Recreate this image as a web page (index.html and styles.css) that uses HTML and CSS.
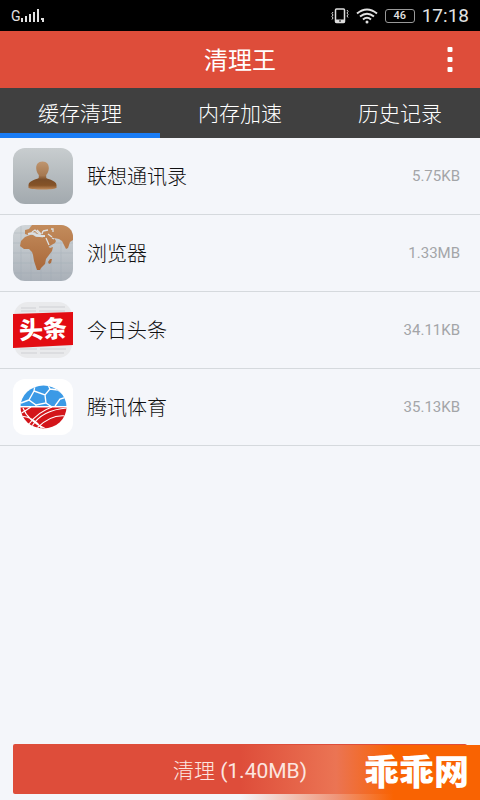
FILE: index.html
```html
<!DOCTYPE html>
<html lang="zh-CN">
<head>
<meta charset="utf-8">
<meta name="viewport" content="width=device-width, initial-scale=1">
<title>清理王</title>
<link rel="stylesheet" href="styles.css">
</head>
<body>
<div class="status">
  <div class="signal"><span class="network">G</span>
    <svg width="24" height="14" viewBox="0 0 24 14" fill="#e2e2e2" aria-hidden="true"><path d="M0 9h2v4H0zM4 7h2v6H4zM8 5h2v8H8zM12 3h2v10h-2zM16 0h2v13h-2zM20 9h3v4h-2v-2h-1z"/></svg>
  </div>
  <div class="tray">
    <svg width="18" height="16" viewBox="0 0 18 16" fill="none" stroke="#ddd" aria-hidden="true"><rect x="4.500" y="1" width="9" height="13.500" rx="1" stroke-width="1.500"/><path d="M4.500 13h9" stroke-width="3"/><path d="M8 13h2" stroke="#000"/><path d="M2 4l-1 1.500L2 7 1 8.500 2 10l-1 1.500M16 2l1 1.500L16 5l1 1.500L16 8l1 1.500"/></svg>
    <svg width="22" height="16" viewBox="0 0 22 16" fill="none" stroke="#e2e2e2" stroke-width="2" aria-hidden="true"><path d="M1 5.500Q11-2.500 21 5.500M4 8.500Q11 3 18 8.500M7 11.500Q11 8 15 11.500"/><circle cx="11" cy="14" r="1.500" fill="#e2e2e2" stroke="none"/></svg>
    <span class="battery">46</span>
    <time class="clock">17:18</time>
  </div>
</div>
<header class="bar">
  <h1 class="title">清理王</h1>
  <button class="more" type="button" aria-label="更多"><svg width="6" height="26" viewBox="0 0 6 26" fill="#fff" aria-hidden="true"><rect x=".5" y="0" width="5" height="5" rx="1"/><rect x=".5" y="10" width="5" height="5" rx="1"/><rect x=".5" y="20" width="5" height="5" rx="1"/></svg></button>
</header>
<nav class="tabs">
  <button class="tab active" type="button">缓存清理</button>
  <button class="tab" type="button">内存加速</button>
  <button class="tab" type="button">历史记录</button>
</nav>
<main class="main">
  <ul class="list">
    <li class="row">
      <svg class="icon" viewBox="0 0 60 56" aria-hidden="true">
        <defs>
          <linearGradient id="silver" x2="0" y2="1"><stop offset="0" stop-color="#c8cdcf"/><stop offset="1" stop-color="#a2a9ae"/></linearGradient>
          <linearGradient id="person" x2="0" y2="1"><stop offset="0" stop-color="#bf9670"/><stop offset=".5" stop-color="#a67850"/><stop offset=".65" stop-color="#7a4d28"/><stop offset=".85" stop-color="#855328"/><stop offset="1" stop-color="#c08a5a"/></linearGradient>
        </defs>
        <rect width="60" height="56" rx="12" fill="url(#silver)"/>
        <path fill="url(#person)" d="M29.500 13.500c4.500 0 6.500 3 6.300 7-.2 3-1.300 5-2.600 6.600v2.400c0 1.800 10.300 2.500 10.300 7.500V40c-4 2-24 2-28 0v-3c0-5 10.300-5.700 10.300-7.500v-2.400c-1.300-1.600-2.400-3.600-2.600-6.600-.2-4 1.800-7 6.300-7z"/>
      </svg>
      <span class="name">联想通讯录</span><span class="size">5.75KB</span>
    </li>
    <li class="row">
      <svg class="icon" viewBox="0 0 60 56" aria-hidden="true">
        <defs>
          <linearGradient id="sea" x2="0" y2="1"><stop offset="0" stop-color="#d0d5d8"/><stop offset="1" stop-color="#a9b0b8"/></linearGradient>
          <linearGradient id="land" gradientUnits="userSpaceOnUse" x1="0" y1="0" x2="0" y2="44"><stop offset="0" stop-color="#c38c5c"/><stop offset="1" stop-color="#aa693b"/></linearGradient>
          <clipPath id="tile"><rect width="60" height="56" rx="12"/></clipPath>
        </defs>
        <g clip-path="url(#tile)">
          <rect width="60" height="56" fill="url(#sea)"/>
          <path d="M8 0v56M18 0v56M28 0v56M38 0v56M48 0v56M0 8h60M0 18h60M0 28h60M0 38h60M0 48h60" stroke="#98a4b0" stroke-width=".6" opacity=".5"/>
          <g fill="url(#land)">
            <path d="M12 9l0-4 4-1 3-4h41v15l-3 2-2 6-2 1-4-8-3-2-5-1 2 3-1 2-7 4-5-9-2-4-4 0-2-2-4 1-3 2z"/>
            <path d="M12 12l5-2 3 0 3 2 4 0 5 1 3 8 2 2 3-1-1 4-6 8-1 5-4 4-1 2-3 0-3-9-1-6-1-3-3-3-5 0-4-3 1-5z"/>
            <path d="M39 34l-1 4-2 1-1-2 2-3z"/>
          </g>
          <g fill="none" stroke="#dce0e2">
            <path d="M15 9l4-1 4 2 4 1 5 0" stroke-width="2"/>
            <path d="M19 7l3-2 3 3 2 1M24 5l4 4M29 9l1-3M30 6l5-1" stroke-width="1.300"/>
            <path d="M38 4l2 0 0 3M39 12l-4-3M33 13l3 7M41 14l-2-1" stroke-width="1.300"/>
          </g>
        </g>
      </svg>
      <span class="name">浏览器</span><span class="size">1.33MB</span>
    </li>
    <li class="row">
      <svg class="icon" viewBox="0 0 60 56" aria-hidden="true">
        <rect x="1" width="58" height="56" rx="14" fill="#e9eaec"/>
        <path d="M8 6h15M8 9h15M26 5h26M26 9h26M7 47h17M27 47h26M8 51h16M27 51h24" stroke="#cfd0d4"/>
        <path d="M0 12l60-2v33L0 46z" fill="#e30c12"/>
        <text class="news" x="30" y="36" text-anchor="middle" transform="rotate(-3 30 28)">头条</text>
      </svg>
      <span class="name">今日头条</span><span class="size">34.11KB</span>
    </li>
    <li class="row">
      <svg class="icon" viewBox="0 0 60 56" aria-hidden="true">
        <defs><clipPath id="ball"><ellipse cx="30.500" cy="28" rx="23" ry="21.500"/></clipPath></defs>
        <rect width="60" height="56" rx="12" fill="#fff"/>
        <g clip-path="url(#ball)">
          <path d="M7 6h47v21H7z" fill="#3b9ae6"/><path d="M7 28.500h47V50H7z" fill="#d3151a"/>
          <path fill="none" stroke="#fff" stroke-width="1.400" d="M22 6l-1 6 11 4 5-6-2-4M37 10l8 1 5 4M21 12l-5 9 7 5 10-2-1-8M16 21l-8 3M23 26v2M33 24l6 4M54 18l-7 2-5 7"/>
          <path fill="none" stroke="#fff" stroke-width="1.200" d="M7 35Q12 32 18 28M10 29Q15 42 33 50M8 37Q22 38 29 50M39 28Q25 33 16 45M54 29Q29 31 19 47M53 37Q38 35 24 49"/>
        </g>
      </svg>
      <span class="name">腾讯体育</span><span class="size">35.13KB</span>
    </li>
  </ul>
</main>
<footer class="footer">
  <button class="clean" type="button"><span class="label">清理 <span class="amount">(1.40MB)</span></span></button>
  <div class="mark">乖乖网</div>
</footer>
</body>
</html>
```
FILE: styles.css
```css
* { box-sizing: border-box; }
body {
  margin: 0;
  min-height: 100vh;
  display: flex;
  flex-direction: column;
  background: #f4f6fa;
  color: #111;
  font-family: Roboto, "Noto Sans CJK SC", sans-serif;
}
button {
  border: 0;
  padding: 0;
  background: none;
  color: inherit;
  font: inherit;
}
.status {
  height: 31px;
  padding: 0 11px;
  display: flex;
  align-items: center;
  justify-content: space-between;
  background: #000;
  color: #e2e2e2;
}
.signal, .tray { display: flex; align-items: center; }
.network { font-size: 14px; }
.tray { gap: 7px; }
.battery {
  width: 30px;
  border: 1px solid #999;
  border-radius: 3px;
  font-size: 11px;
  line-height: 12px;
  font-weight: 500;
  text-align: center;
}
.clock { font-size: 19px; }
.bar {
  height: 57px;
  display: grid;
  grid-template-columns: 1fr auto 1fr;
  align-items: center;
  background: #de4d3a;
  color: #fff;
}
.title {
  grid-column: 2;
  margin: 0;
  padding-top: 3px;
  font-size: 24px;
  line-height: 32px;
  font-weight: 400;
}
.more {
  justify-self: end;
  padding: 8px 27px;
  display: flex;
}
.tabs {
  height: 50px;
  display: grid;
  grid-template-columns: repeat(3, 1fr);
  background: #404040;
  color: #fff;
}
.tab {
  padding-top: 3px;
  border-bottom: 5px solid transparent;
  font-size: 21px;
  font-weight: 300;
}
.active { border-bottom-color: #197cf5; }
.main { flex: 1; }
.list { margin: 0; padding: 0; list-style: none; }
.row {
  min-height: 77px;
  padding: 0 20px 0 13px;
  display: flex;
  align-items: center;
  gap: 14px;
  border-bottom: 1px solid #d5d9dd;
}
.icon { width: 60px; height: 56px; flex: none; }
.name { flex: 1; padding-top: 2px; font-size: 20px; line-height: 28px; font-weight: 300; }
.size { color: #a3a5a8; font-size: 15px; }
.news {
  fill: #fff;
  font-family: "Noto Sans CJK SC", sans-serif;
  font-size: 24px;
  font-weight: 900;
}
.footer { position: relative; padding: 0 13px 6px; }
.clean {
  width: 100%;
  height: 50px;
  border-radius: 2px;
  background: #de4d3a;
  color: #fce6e0;
  font-size: 21px;
  font-weight: 300;
}
.label { position: relative; z-index: 1; }
.amount { font-weight: 400; }
.mark {
  position: absolute;
  right: 0;
  bottom: 0;
  width: 240px;
  height: 55px;
  padding-right: 11px;
  background: linear-gradient(90deg, rgba(236, 120, 90, 0), rgba(238, 126, 90, .8) 40%, #f96302 64%);
  color: #fff;
  font-size: 35px;
  line-height: 58px;
  font-weight: 900;
  text-align: right;
  pointer-events: none;
}
```
